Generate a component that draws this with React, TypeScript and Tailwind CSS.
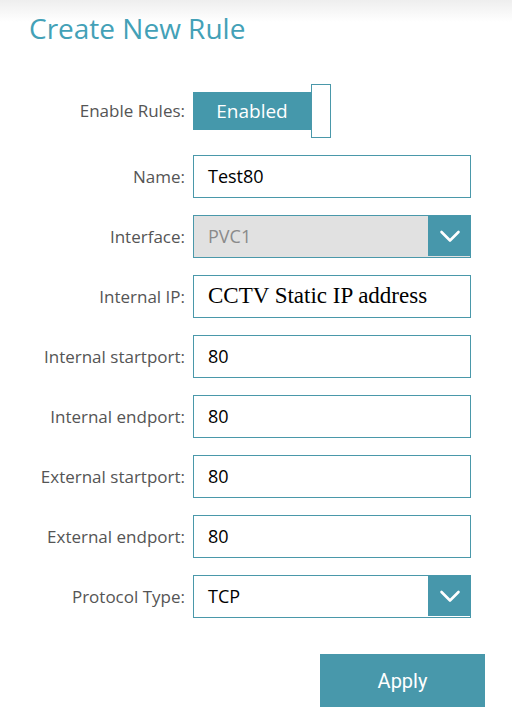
import React from "react";

const Chevron = () => (
  <svg width="22" height="14" viewBox="0 0 22 14" fill="none">
    <path d="M2.5 3 L11 11.5 L19.5 3" stroke="white" strokeWidth="2.6" strokeLinecap="round" strokeLinejoin="round" />
  </svg>
);

const Label = ({ children }: { children: React.ReactNode }) => (
  <div className="w-[193px] shrink-0 text-right text-[17px] text-[#555555] pr-[8px]">
    {children}
  </div>
);

const TextRow = ({ label, value, serif }: { label: string; value: string; serif?: boolean }) => (
  <div className="flex items-center h-[43px]">
    <Label>{label}</Label>
    <div className="w-[278px] h-[43px] border border-[#4a98aa] bg-white flex items-center pl-[14px]">
      {serif ? (
        <span className="text-[23px] text-black" style={{ fontFamily: '"Liberation Serif", "DejaVu Serif", serif' }}>
          {value}
        </span>
      ) : (
        <span className="text-[18px] text-black">{value}</span>
      )}
    </div>
  </div>
);

const SelectRow = ({ label, value, disabled }: { label: string; value: string; disabled?: boolean }) => (
  <div className="flex items-center h-[43px]">
    <Label>{label}</Label>
    <div
      className={`w-[278px] h-[43px] border border-[#4a98aa] flex items-center justify-between ${
        disabled ? "bg-[#e1e1e1]" : "bg-white"
      }`}
    >
      <span className={`pl-[14px] text-[18px] ${disabled ? "text-[#8a8a8a]" : "text-black"}`}>{value}</span>
      <div className="w-[43px] h-[41px] -mr-px -mt-[2px] bg-[#4797ab] flex items-center justify-center">
        <Chevron />
      </div>
    </div>
  </div>
);

export default function App() {
  return (
    <div
      className="w-[512px] h-[722px] bg-white"
      style={{ fontFamily: '"Open Sans", "Liberation Sans", sans-serif' }}
    >
      <div className="bg-gradient-to-b from-[#eeeeee] to-white h-[22px] absolute top-0 left-0 w-[512px]" />
      <div className="relative pt-[8px] pl-[29px]">
        <h1 className="text-[28px] leading-[40px] text-[#43a1b7]" style={{ fontWeight: 400 }}>
          Create New Rule
        </h1>
      </div>
      <div className="flex flex-col mt-[36px]">
        <div className="flex items-center h-[54px]">
          <Label>Enable Rules:</Label>
          <div className="flex items-center">
            <div className="w-[118px] h-[38px] bg-[#4598ab] flex items-center justify-center text-white text-[19px]">
              Enabled
            </div>
            <div className="w-[20px] h-[54px] border-[1.5px] border-[#4a98aa] bg-white" />
          </div>
        </div>
        <div className="flex flex-col gap-[17px] mt-[17px]">
          <TextRow label="Name:" value="Test80" />
          <SelectRow label="Interface:" value="PVC1" disabled />
          <TextRow label="Internal IP:" value="CCTV Static IP address" serif />
          <TextRow label="Internal startport:" value="80" />
          <TextRow label="Internal endport:" value="80" />
          <TextRow label="External startport:" value="80" />
          <TextRow label="External endport:" value="80" />
          <SelectRow label="Protocol Type:" value="TCP" />
        </div>
        <div className="flex justify-end pr-[27px] mt-[36px]">
          <button
            className="w-[165px] h-[53px] bg-[#4898ab] text-white text-[20px]"
            style={{ fontFamily: '"Roboto", "Liberation Sans", sans-serif' }}
          >
            Apply
          </button>
        </div>
      </div>
    </div>
  );
}
